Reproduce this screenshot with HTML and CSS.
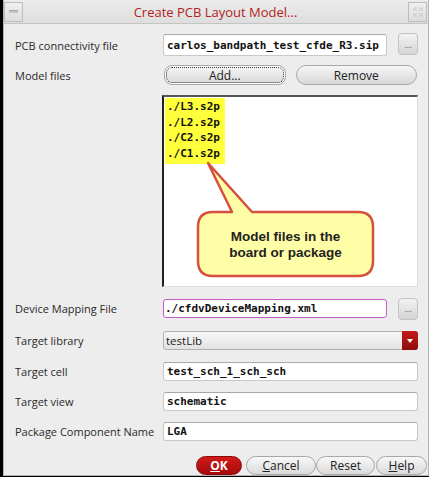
FILE: index.html
```html
<!DOCTYPE html>
<html>
<head>
<meta charset="utf-8">
<link rel="stylesheet" href="styles.css">
</head>
<body>
<div class="window">
  <div class="titlebar">
    <span class="tb-btn tb-min"><span class="dash"></span></span>
    <span class="title">Create PCB Layout Model...</span>
    <span class="tb-btn tb-max">
      <svg width="12" height="12" viewBox="0 0 12 12"><path d="M2 5V2h3M7 2h3v3M10 7v3H7M5 10H2V7M3 3l2 2M9 3L7 5M9 9L7 7M3 9l2-2" fill="none" stroke="#c8c8c8" stroke-width="1"/></svg>
    </span>
  </div>
  <div class="form">
    <div class="row r1">
      <span class="label">PCB connectivity file</span>
      <div class="field mono">carlos_bandpath_test_cfde_R3.sip</div>
      <span class="dots">...</span>
    </div>
    <div class="row r2">
      <span class="label">Model files</span>
      <div class="pair">
        <span class="pill focus">Add...</span>
        <span class="pill">Remove</span>
      </div>
    </div>
    <div class="row r3">
      <span class="label"></span>
      <div class="listbox">
        <div class="items mono">
          <div>./L3.s2p</div>
          <div>./L2.s2p</div>
          <div>./C2.s2p</div>
          <div>./C1.s2p</div>
        </div>
        <svg class="callout" width="256" height="192" viewBox="0 0 256 192">
          <path d="M52 117 H70 L46 68 L90 117 H196 Q211 117 211 132 V166 Q211 181 196 181 H51 Q36 181 36 166 V132 Q36 117 51 117 Z" fill="#fefea6" stroke="#d6503e" stroke-width="2.5" stroke-linejoin="round"/>
        </svg>
        <div class="callout-text">Model files in the<br>board or package</div>
      </div>
    </div>
    <div class="row r4">
      <span class="label">Device Mapping File</span>
      <div class="field mono magenta">./cfdvDeviceMapping.xml</div>
      <span class="dots">...</span>
    </div>
    <div class="row r5">
      <span class="label">Target library</span>
      <div class="combo"><span class="combo-text">testLib</span><span class="combo-arrow"></span></div>
    </div>
    <div class="row r6">
      <span class="label">Target cell</span>
      <div class="field mono">test_sch_1_sch_sch</div>
    </div>
    <div class="row r7">
      <span class="label">Target view</span>
      <div class="field mono">schematic</div>
    </div>
    <div class="row r8">
      <span class="label">Package Component Name</span>
      <div class="field mono">LGA</div>
    </div>
    <div class="buttons">
      <span class="btn ok"><u>O</u>K</span>
      <span class="btn cancel"><u>C</u>ancel</span>
      <span class="btn reset">Reset</span>
      <span class="btn help"><u>H</u>elp</span>
    </div>
  </div>
</div>
</body>
</html>
```

FILE: styles.css
```css
html, body {
  margin: 0;
  padding: 0;
  width: 429px;
  height: 477px;
  background: #000;
  overflow: hidden;
}
.window {
  margin-left: 3px;
  width: 424px;
  height: 475px;
  background: #ededed;
  border-left: 1px solid #b4b4b4;
  border-right: 1px solid #b4b4b4;
  border-bottom: 1px solid #b4b4b4;
  font-family: "Open Sans", "Noto Sans", sans-serif;
  font-size: 12px;
  color: #222;
}
.titlebar {
  height: 23px;
  display: flex;
  align-items: center;
  background: linear-gradient(#ececec, #dedede);
  border-bottom: 1px solid #c4c4c4;
  position: relative;
}
.tb-btn {
  width: 17px;
  height: 18px;
  border: 1px solid #bdbdbd;
  background: linear-gradient(#f0f0f0, #dcdcdc);
  display: flex;
  align-items: center;
  justify-content: center;
}
.tb-max { margin-left: auto; margin-right: 1px; }
.dash {
  width: 9px;
  height: 2px;
  background: #c2c2c2;
  border-top: 1px solid #a8a8a8;
}
.title {
  flex: 1;
  text-align: center;
  color: #b42222;
  font-size: 13px;
}
.form {
  padding: 0 10px 0 11px;
}
.row {
  display: flex;
  align-items: center;
}
.label {
  width: 146px;
  flex: none;
  font-size: 11px;
  color: #2a2a2a;
}
.r1 { margin-top: 10px; height: 22px; }
.r2 { margin-top: 9px; height: 20px; }
.r3 { margin-top: 10px; height: 192px; align-items: stretch; }
.r4 { margin-top: 12px; height: 19px; }
.r5 { margin-top: 13px; height: 19px; }
.r6 { margin-top: 12px; height: 19px; }
.r7 { margin-top: 11px; height: 19px; }
.r8 { margin-top: 11px; height: 19px; }
.mono {
  font-family: "DejaVu Sans Mono", monospace;
  font-size: 11px;
  color: #111;
}
.field {
  flex: 1;
  height: 100%;
  margin-left: 2px;
  box-sizing: border-box;
  background: #fff;
  border: 1px solid #c8c8c8;
  border-top-color: #a8a8a8;
  border-radius: 3px;
  display: flex;
  align-items: center;
  padding-left: 3px;
  font-weight: bold;
}
.magenta { border: 1px solid #c25bc8; padding-left: 1px; }
.dots {
  width: 20px;
  height: 22px;
  margin-left: 11px;
  box-sizing: border-box;
  border: 1px solid #c2c2c2;
  border-radius: 4px;
  background: linear-gradient(#f2f2f2, #d4d4d4);
  font-size: 9px;
  color: #555;
  display: flex;
  align-items: center;
  justify-content: center;
  line-height: 1;
}
.r1 .dots { margin-top: -2px; }
.pair {
  flex: 1;
  display: flex;
  gap: 10px;
  padding-left: 3px;
  margin-right: 1px;
}
.pill {
  flex: 1;
  height: 20px;
  box-sizing: border-box;
  border: 1px solid #a8a8a8;
  border-radius: 10px;
  background: linear-gradient(#f6f6f6, #d8d8d8);
  display: flex;
  align-items: center;
  justify-content: center;
  font-size: 12px;
  color: #222;
}
.pill.focus {
  box-shadow: inset 0 0 0 1px #fff;
  outline: 1px dotted #333;
  outline-offset: -3px;
  border-radius: 8px;
}
.listbox {
  flex: 1;
  position: relative;
  background: #fff;
  border-left: 2px solid #222;
  border-top: 2px solid #555;
  border-right: 1px solid #ddd;
  border-bottom: 1px solid #ddd;
  margin-left: 1px;
}
.items {
  display: inline-block;
  background: #ffff3c;
  padding: 1px 5px 3px 2px;
  margin-left: 1px;
  margin-top: 1px;
  font-weight: bold;
  line-height: 15.5px;
}
.callout {
  position: absolute;
  left: -2px;
  top: -2px;
}
.callout-text {
  position: absolute;
  left: 34px;
  top: 132px;
  width: 175px;
  text-align: center;
  font-family: "Liberation Sans", Arial, sans-serif;
  font-weight: bold;
  font-size: 13.5px;
  line-height: 16px;
  color: #222;
}
.combo {
  flex: 1;
  height: 100%;
  box-sizing: border-box;
  border: 1px solid #b0b0b0;
  border-radius: 3px;
  background: linear-gradient(#f8f8f8, #e2e2e2);
  display: flex;
  align-items: center;
  margin-left: 2px;
}
.combo-text {
  flex: 1;
  padding-left: 2px;
  font-size: 11.5px;
}
.combo-arrow {
  width: 16px;
  height: 19px;
  margin-right: -1px;
  background: linear-gradient(#c41a1a, #8e0c0c);
  border-radius: 0 3px 3px 0;
  position: relative;
}
.combo-arrow::after {
  content: "";
  position: absolute;
  left: 5px;
  top: 8px;
  border-left: 3px solid transparent;
  border-right: 3px solid transparent;
  border-top: 4px solid #fff;
}
.buttons {
  display: flex;
  justify-content: flex-end;
  margin-top: 15px;
  margin-right: -9px;
  height: 19px;
}
.btn {
  height: 19px;
  box-sizing: border-box;
  border: 1px solid #a8a8a8;
  border-radius: 10px;
  background: linear-gradient(#f8f8f8, #dadada);
  display: flex;
  align-items: center;
  justify-content: center;
  font-size: 12px;
  color: #222;
}
.ok {
  width: 46px;
  margin-right: 4px;
  background: linear-gradient(#d21a1a, #a50a0a);
  border-color: #8a0808;
  color: #fff;
  font-weight: bold;
}
.cancel { width: 70px; }
.reset { width: 59px; }
.help { width: 51px; margin-left: 1px; }
```
